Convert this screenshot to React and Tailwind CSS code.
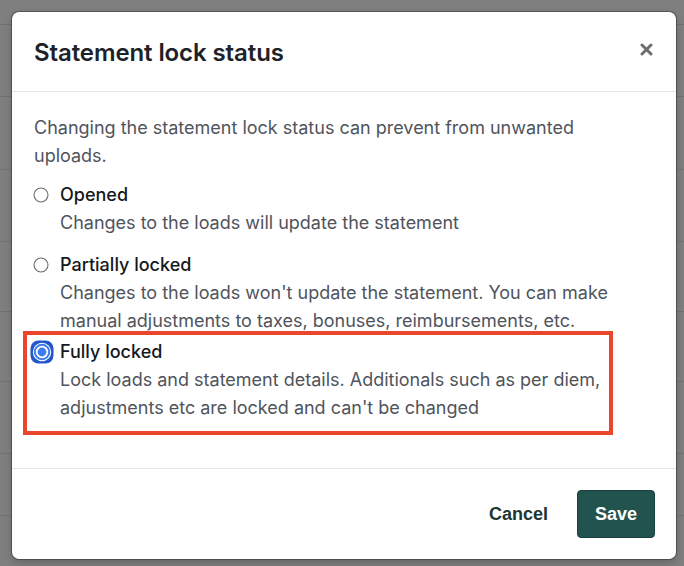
import React from "react";

const bgRows = [25, 72, 73, 72, 70, 70, 72, 62, 60];

function Radio({ checked }) {
  if (checked) {
    return (
      <svg width="24" height="24" viewBox="0 0 24 24" className="shrink-0 -ml-[4px]">
        <rect x="0.5" y="0.5" width="23" height="23" rx="8" fill="#2357c9" />
        <circle cx="12" cy="12" r="9.2" fill="#ffffff" />
        <circle cx="12" cy="12" r="8.2" fill="#3b7cf0" />
        <circle cx="12" cy="12" r="6.2" fill="#ffffff" />
        <circle cx="12" cy="12" r="4.4" fill="#3b7cf0" />
      </svg>
    );
  }
  return (
    <svg width="16" height="16" viewBox="0 0 16 16" className="shrink-0 -ml-[1px]">
      <circle cx="8" cy="8" r="7" fill="#ffffff" stroke="#6b6b6b" strokeWidth="1.1" />
    </svg>
  );
}

function Option({ label, desc, checked, className = "" }) {
  return (
    <div className={"flex " + className}>
      <div className="w-[26px] h-[28px] flex items-center shrink-0">
        <Radio checked={checked} />
      </div>
      <div className="flex flex-col">
        <div className="text-[18px] leading-[28px] font-medium text-[#15181d]">{label}</div>
        <div className="text-[18px] leading-[28px] text-[#50545c]">{desc}</div>
      </div>
    </div>
  );
}

export default function App() {
  return (
    <div
      className="relative w-[684px] h-[566px] bg-[#7f7f7f] overflow-hidden"
      style={{ fontFamily: "Inter, 'Noto Sans', sans-serif" }}
    >
      <div className="flex flex-col">
        {bgRows.map((h, i) => (
          <div key={i} className="border-b border-[#727272]" style={{ height: h }} />
        ))}
      </div>

      <div className="absolute left-[12px] top-[12px] w-[664px] h-[547px] bg-white rounded-[7px] shadow-[0_0_0_1px_rgba(40,40,40,0.45),0_4px_10px_rgba(0,0,0,0.2)] flex flex-col overflow-hidden">
        <div className="h-[80px] flex items-center justify-between pl-[22px] pr-[23px] border-b border-[#e3e5e8] shrink-0">
          <div className="text-[24px] font-semibold text-[#1d2229] tracking-[-0.1px] pt-[2px]">
            Statement lock status
          </div>
          <svg width="13" height="13" viewBox="0 0 13 13" className="-mt-[4px]">
            <path d="M2 2 L11 11 M11 2 L2 11" stroke="#6e6e6e" strokeWidth="3" strokeLinecap="round" />
          </svg>
        </div>

        <div className="flex flex-col px-[22px] pt-[22px] pb-[46px] shrink-0">
          <p className="max-w-[596px] text-[18px] leading-[28px] text-[#50545c]">
            Changing the statement lock status can prevent from unwanted uploads.
          </p>
          <Option
            className="mt-[11px]"
            label="Opened"
            desc="Changes to the loads will update the statement"
          />
          <Option
            className="mt-[14px]"
            label="Partially locked"
            desc="Changes to the loads won't update the statement. You can make manual adjustments to taxes, bonuses, reimbursements, etc."
          />
          <div className="relative mt-[3px]">
            <div className="absolute -left-[11px] -top-[7px] w-[590px] h-[104px] border-[4px] border-[#e9462b] pointer-events-none" />
            <Option
              checked
              label="Fully locked"
              desc="Lock loads and statement details. Additionals such as per diem, adjustments etc are locked and can't be changed"
            />
          </div>
        </div>

        <div className="flex-1 border-t border-[#e3e5e8] flex items-center justify-end pr-[21px] gap-[29px]">
          <span
            className="text-[18px] font-bold text-[#1c3634]"
            style={{ fontFamily: "'Liberation Sans', Arial, sans-serif" }}
          >
            Cancel
          </span>
          <button
            className="w-[78px] h-[48px] rounded-[4px] bg-[#23534f] border border-[#17403c] text-white text-[18px] font-bold"
            style={{ fontFamily: "'Liberation Sans', Arial, sans-serif" }}
          >
            Save
          </button>
        </div>
      </div>
    </div>
  );
}
